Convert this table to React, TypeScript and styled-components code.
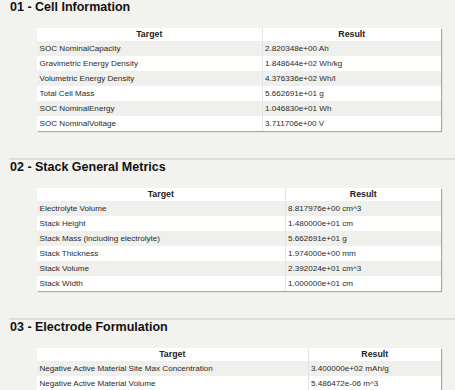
import React from "react";
import styled, { createGlobalStyle } from "styled-components";

const GlobalStyle = createGlobalStyle`
  html, body {
    margin: 0;
    padding: 0;
    background: #f2f2ee;
    font-family: "Liberation Sans", Arial, sans-serif;
  }
`;

const Page = styled.div`
  padding-left: 9px;
  width: 446px;
  overflow: hidden;
`;

const Section = styled.section<{ $divided?: boolean }>`
  border-top: ${(p) => (p.$divided ? "2px solid #dcdcd9" : "none")};
  padding-bottom: 27px;

  &:last-child {
    padding-bottom: 0;
  }
`;

const Title = styled.h2`
  margin: 0 0 0 1px;
  font-size: 12.5px;
  line-height: 15px;
  font-weight: bold;
  color: #111;
`;

const TableBox = styled.div`
  margin: 13px 0 0 28px;
  width: 404px;
  box-shadow: 1px 1px 1px #a8a8a6;
  background: #fff;
`;

const Table = styled.table`
  width: 100%;
  border-collapse: collapse;
  table-layout: fixed;
`;

const HeadCell = styled.th<{ $first?: boolean }>`
  height: 13px;
  padding: 0;
  font-size: 8.8px;
  line-height: 13px;
  font-weight: bold;
  color: #222;
  text-align: center;
  background: #fff;
  border-left: ${(p) => (p.$first ? "none" : "1px solid #e4e4e0")};
`;

const Row = styled.tr`
  background: #fff;
  &:nth-child(odd) {
    background: #efefeb;
  }
`;

const Cell = styled.td<{ $first?: boolean }>`
  height: 15px;
  padding: 0 0 0 2.5px;
  font-size: 8.1px;
  line-height: 15px;
  color: #2a2a2a;
  white-space: nowrap;
  overflow: hidden;
  border-left: ${(p) => (p.$first ? "none" : "1px solid #e4e4e0")};
`;

interface Sheet {
  title: string;
  split: number;
  rows: [string, string][];
}

const sheets: Sheet[] = [
  {
    title: "01 - Cell Information",
    split: 225,
    rows: [
      ["SOC NominalCapacity", "2.820348e+00 Ah"],
      ["Gravimetric Energy Density", "1.848644e+02 Wh/kg"],
      ["Volumetric Energy Density", "4.376336e+02 Wh/l"],
      ["Total Cell Mass", "5.662691e+01 g"],
      ["SOC NominalEnergy", "1.046830e+01 Wh"],
      ["SOC NominalVoltage", "3.711706e+00 V"],
    ],
  },
  {
    title: "02 - Stack General Metrics",
    split: 248,
    rows: [
      ["Electrolyte Volume", "8.817976e+00 cm^3"],
      ["Stack Height", "1.480000e+01 cm"],
      ["Stack Mass (including electrolyte)", "5.662691e+01 g"],
      ["Stack Thickness", "1.974000e+00 mm"],
      ["Stack Volume", "2.392024e+01 cm^3"],
      ["Stack Width", "1.000000e+01 cm"],
    ],
  },
  {
    title: "03 - Electrode Formulation",
    split: 271,
    rows: [
      ["Negative Active Material Site Max Concentration", "3.400000e+02 mAh/g"],
      ["Negative Active Material Volume", "5.486472e-06 m^3"],
    ],
  },
];

const ResultTable = ({ sheet }: { sheet: Sheet }) => (
  <TableBox>
    <Table>
      <colgroup>
        <col style={{ width: sheet.split }} />
        <col />
      </colgroup>
      <thead>
        <tr>
          <HeadCell $first>Target</HeadCell>
          <HeadCell>Result</HeadCell>
        </tr>
      </thead>
      <tbody>
        {sheet.rows.map(([target, result]) => (
          <Row key={target}>
            <Cell $first>{target}</Cell>
            <Cell>{result}</Cell>
          </Row>
        ))}
      </tbody>
    </Table>
  </TableBox>
);

export default function App() {
  return (
    <>
      <GlobalStyle />
      <Page>
        {sheets.map((sheet, i) => (
          <Section key={sheet.title} $divided={i > 0}>
            <Title>{sheet.title}</Title>
            <ResultTable sheet={sheet} />
          </Section>
        ))}
      </Page>
    </>
  );
}
